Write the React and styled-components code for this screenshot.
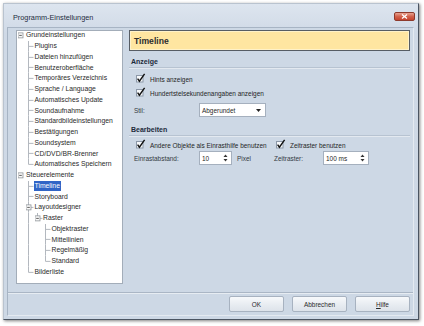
import React from "react";
import styled, { createGlobalStyle } from "styled-components";

const Global = createGlobalStyle`
  html, body {
    margin: 0;
    padding: 0;
    background: #ffffff;
  }
  body {
    font-family: "Liberation Sans", Arial, sans-serif;
    font-size: 6.45px;
    color: #1f1f1f;
  }
`;

const Page = styled.div`
  padding: 3px;
  width: 424px;
  height: 326px;
  box-sizing: border-box;
`;

const Window = styled.div`
  width: 416px;
  height: 317px;
  box-sizing: border-box;
  display: flex;
  flex-direction: column;
  padding: 0 4px 3px 3px;
  background: linear-gradient(#dde5ef, #cfd9e6 30px, #cdd8e5);
  border: 1px solid;
  border-color: #b9c3cf #4b5562 #4b5562 #b9c3cf;
  box-shadow: 1px 1px 3px rgba(0, 0, 0, 0.5);
`;

const TitleBar = styled.div`
  height: 23px;
  display: flex;
  align-items: center;
  justify-content: space-between;
  padding: 2px 0 0 6px;
  box-sizing: border-box;
`;

const Title = styled.div`
  font-size: 7.3px;
  color: #1d2c40;
  margin-top: 2px;
`;

const CloseButton = styled.div`
  width: 21px;
  height: 9px;
  margin-right: -1px;
  border: 1px solid #8d3a2c;
  border-radius: 2px;
  box-sizing: border-box;
  background: linear-gradient(#e8a392, #d2624c 50%, #c4442f);
  display: flex;
  align-items: center;
  justify-content: center;
`;

const Client = styled.div`
  flex: 1;
  display: flex;
  flex-direction: column;
  border: 1px solid #a7b4c4;
  border-right-color: #e4eaf1;
  border-bottom-color: #e4eaf1;
  background: #cdd8e5;
`;

const Main = styled.div`
  display: flex;
  gap: 6px;
  padding: 2px 3px 0 8px;
  height: 256px;
  box-sizing: border-box;
`;

const TreeBox = styled.div`
  width: 107px;
  height: 254px;
  box-sizing: border-box;
  background: #ffffff;
  border: 1px solid #a3adb9;
  overflow: hidden;
  font-size: 6.8px;
`;

const TreeList = styled.div`
  margin-top: -1px;
  display: flex;
  flex-direction: column;
`;

const TreeRow = styled.div`
  height: 10.75px;
  display: flex;
  align-items: center;
  padding-left: 0.5px;
`;

const TreeLabel = styled.span`
  padding: 1px 1px;
  line-height: 8px;
  margin-left: -1px;
  white-space: nowrap;
  color: ${(p) => (p.$selected ? "#ffffff" : "#2a2a2a")};
  background: ${(p) => (p.$selected ? "#3165c6" : "transparent")};
`;

const Panel = styled.div`
  flex: 1;
  display: flex;
  flex-direction: column;
`;

const Header = styled.div`
  height: 21px;
  box-sizing: border-box;
  background: #ffe6a1;
  border: 1px solid #575d64;
  box-shadow: inset 0 0 0 1px #fff2c9;
  display: flex;
  align-items: center;
  padding-left: 4px;
  font-size: 8.6px;
  font-weight: bold;
  color: #2d2d2d;
`;

const SectionTitle = styled.div`
  margin-top: ${(p) => p.$mt}px;
  height: 10px;
  line-height: 10px;
  padding-left: 2px;
  font-weight: bold;
  font-size: 7px;
  color: #1c2a3b;
  border-bottom: 1px solid #b7c3d1;
  box-shadow: 0 1px 0 #e3e9f0;
`;

const Rows = styled.div`
  display: flex;
  flex-direction: column;
  padding-left: 5px;
  margin-top: ${(p) => p.$mt}px;
  gap: ${(p) => p.$gap || 0}px;
`;

const CheckRow = styled.div`
  height: 12px;
  display: flex;
  align-items: center;
  gap: 4px;
  padding-left: 2px;
  white-space: nowrap;
`;

const FieldRow = styled.div`
  height: 14px;
  display: flex;
  align-items: center;
  white-space: nowrap;
`;

const Grid = styled.div`
  display: grid;
  grid-template-columns: 140px 1fr;
  padding-left: 5px;
  margin-top: 3px;
`;

const Label = styled.span`
  width: ${(p) => p.$w}px;
  flex: none;
  color: #333a42;
`;

const Select = styled.div`
  width: 67px;
  height: 14px;
  box-sizing: border-box;
  background: #ffffff;
  border: 1px solid #a5b0be;
  display: flex;
  align-items: center;
  justify-content: space-between;
  padding: 0 4px 0 2px;
`;

const Spin = styled.div`
  width: ${(p) => p.$w}px;
  height: 14px;
  box-sizing: border-box;
  background: #ffffff;
  border: 1px solid #a5b0be;
  display: flex;
  align-items: center;
  justify-content: space-between;
  padding: 0 3px 0 2px;
`;

const Unit = styled.span`
  margin-left: 5px;
  color: #333a42;
`;

const Footer = styled.div`
  margin-top: 8px;
  border-top: 1px solid #aab6c5;
  box-shadow: inset 0 1px 0 #e6ecf2;
  display: flex;
  justify-content: flex-end;
  gap: 8px;
  padding: 3px 3px 0 0;
`;

const Button = styled.div`
  width: 55px;
  height: 16px;
  box-sizing: border-box;
  border: 1px solid #a7b2c0;
  border-radius: 2px;
  background: linear-gradient(#f7f9fb, #e9edf2 50%, #dde3ea);
  display: flex;
  align-items: center;
  justify-content: center;
  color: #2a2a2a;
  u {
    text-decoration: underline;
  }
`;

function Check() {
  return (
    <svg width="10" height="10" viewBox="0 0 10 10" style={{ marginTop: -2 }}>
      <rect x="0.5" y="2.5" width="6.5" height="6.5" fill="#f6f8fa" stroke="#8c98a8" />
      <path d="M1.6 5.6 L3.4 8.2 L8.6 0.8" fill="none" stroke="#111" strokeWidth="1.4" />
    </svg>
  );
}

function Caret() {
  return (
    <svg width="5" height="3" viewBox="0 0 5 3">
      <path d="M0 0 H5 L2.5 3 Z" fill="#222" />
    </svg>
  );
}

function SpinArrows() {
  return (
    <svg width="5" height="8" viewBox="0 0 5 8">
      <path d="M0.5 3 H4.5 L2.5 0.5 Z" fill="#333" />
      <path d="M0.5 5 H4.5 L2.5 7.5 Z" fill="#333" />
    </svg>
  );
}

function TreeCell({ kind }) {
  const h = 10.75;
  const x = 2.5;
  const m = h / 2;
  const line = "#b3b8bf";
  const hasPipe = kind.includes("pipe") || kind.includes("tee");
  const hasElbow = kind.includes("elbow");
  const hasDash = kind.includes("tee") || kind.includes("elbow");
  const exp = kind.includes("exp");
  return (
    <svg width="8.5" height={h} viewBox={`0 0 8.5 ${h}`} style={{ flex: "none" }}>
      {hasPipe && <line x1={x} y1="0" x2={x} y2={h} stroke={line} strokeWidth="1" />}
      {hasElbow && <line x1={x} y1="0" x2={x} y2={m} stroke={line} strokeWidth="1" />}
      {hasDash && <line x1={x} y1={m} x2="7.5" y2={m} stroke={line} strokeWidth="1" />}
      {exp && (
        <g>
          <rect x={x - 2.5} y={m - 2.5} width="5" height="5" fill="#fbfbfb" stroke="#8f9499" strokeWidth="0.8" />
          <line x1={x - 1.3} y1={m} x2={x + 1.3} y2={m} stroke="#333" strokeWidth="0.8" />
        </g>
      )}
    </svg>
  );
}

const treeRows = [
  ["Grundeinstellungen", ["exp"]],
  ["Plugins", ["", "tee"]],
  ["Dateien hinzufügen", ["", "tee"]],
  ["Benutzeroberfläche", ["", "tee"]],
  ["Temporäres Verzeichnis", ["", "tee"]],
  ["Sprache / Language", ["", "tee"]],
  ["Automatisches Update", ["", "tee"]],
  ["Soundaufnahme", ["", "tee"]],
  ["Standardbildeinstellungen", ["", "tee"]],
  ["Bestätigungen", ["", "tee"]],
  ["Soundsystem", ["", "tee"]],
  ["CD/DVD/BR-Brenner", ["", "tee"]],
  ["Automatisches Speichern", ["", "elbow"]],
  ["Steuerelemente", ["exp"]],
  ["Timeline", ["", "tee"], true],
  ["Storyboard", ["", "tee"]],
  ["Layoutdesigner", ["", "tee exp"]],
  ["Raster", ["", "pipe", "elbow exp"]],
  ["Objektraster", ["", "pipe", "", "tee"]],
  ["Mittellinien", ["", "pipe", "", "tee"]],
  ["Regelmäßig", ["", "pipe", "", "tee"]],
  ["Standard", ["", "pipe", "", "elbow"]],
  ["Bilderliste", ["", "elbow"]],
];

export default function App() {
  return (
    <Page>
      <Global />
      <Window>
        <TitleBar>
          <Title>Programm-Einstellungen</Title>
          <CloseButton>
            <svg width="7" height="5" viewBox="0 0 7 5">
              <path d="M1 0.5 L6 4.5 M6 0.5 L1 4.5" stroke="#fff" strokeWidth="1.3" />
            </svg>
          </CloseButton>
        </TitleBar>
        <Client>
          <Main>
            <TreeBox>
              <TreeList>
                {treeRows.map(([label, cells, selected]) => (
                  <TreeRow key={label}>
                    {cells.map((c, i) => (
                      <TreeCell key={i} kind={c} />
                    ))}
                    <TreeLabel $selected={selected}>{label}</TreeLabel>
                  </TreeRow>
                ))}
              </TreeList>
            </TreeBox>
            <Panel>
              <Header>Timeline</Header>
              <SectionTitle $mt={6}>Anzeige</SectionTitle>
              <Rows $mt={5} $gap={2}>
                <CheckRow>
                  <Check />
                  Hints anzeigen
                </CheckRow>
                <CheckRow>
                  <Check />
                  Hundertstelsekundenangaben anzeigen
                </CheckRow>
              </Rows>
              <Rows $mt={4}>
                <FieldRow>
                  <Label $w={65}>Stil:</Label>
                  <Select>
                    Abgerundet
                    <Caret />
                  </Select>
                </FieldRow>
              </Rows>
              <SectionTitle $mt={8}>Bearbeiten</SectionTitle>
              <Grid>
                <CheckRow>
                  <Check />
                  Andere Objekte als Einrasthilfe benutzen
                </CheckRow>
                <CheckRow>
                  <Check />
                  Zeitraster benutzen
                </CheckRow>
                <FieldRow>
                  <Label $w={65}>Einrastabstand:</Label>
                  <Spin $w={33}>
                    10
                    <SpinArrows />
                  </Spin>
                  <Unit>Pixel</Unit>
                </FieldRow>
                <FieldRow>
                  <Label $w={49}>Zeitraster:</Label>
                  <Spin $w={46}>
                    100 ms
                    <SpinArrows />
                  </Spin>
                </FieldRow>
              </Grid>
            </Panel>
          </Main>
          <Footer>
            <Button>OK</Button>
            <Button>Abbrechen</Button>
            <Button>
              <span>
                <u>H</u>ilfe
              </span>
            </Button>
          </Footer>
        </Client>
      </Window>
    </Page>
  );
}
